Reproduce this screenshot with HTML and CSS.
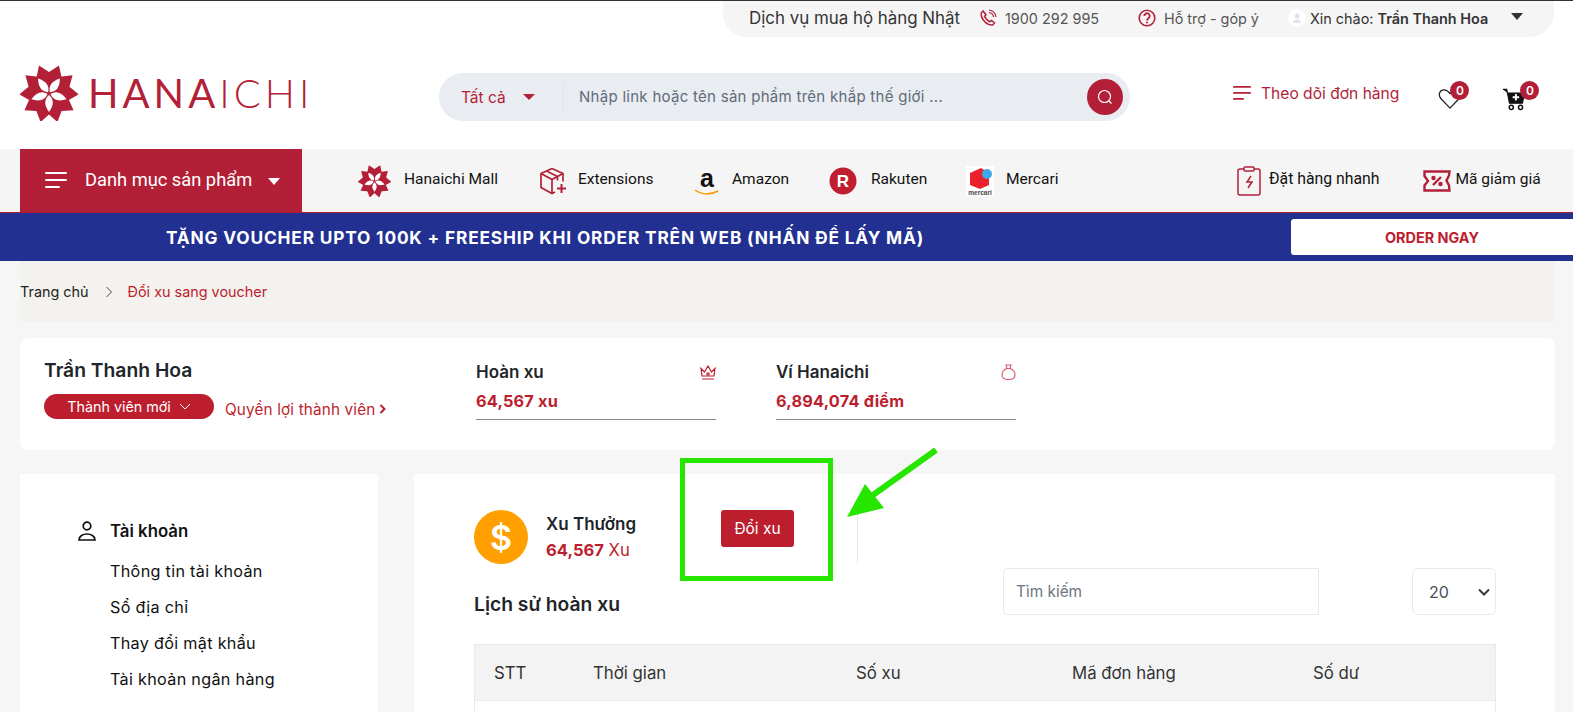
FILE: index.html
```html
<!DOCTYPE html>
<html lang="vi">
<head>
<meta charset="utf-8">
<title>Hanaichi - Đổi xu sang voucher</title>
<link rel="stylesheet" href="styles.css">
</head>
<body>
<svg class="defs" width="0" height="0" aria-hidden="true">
  <defs>
    <g id="flower">
      <g fill="#b41f38">
        <path id="petal" d="M-10-28 0-21.500 10-28 14-9 0 1-14-9Z"/>
        <use href="#petal" transform="rotate(72)"/>
        <use href="#petal" transform="rotate(144)"/>
        <use href="#petal" transform="rotate(216)"/>
        <use href="#petal" transform="rotate(288)"/>
      </g>
      <g fill="#fff">
        <path id="inner" d="M0 1.500Q7.500 8 0 18.500Q-7.500 8 0 1.500Z"/>
        <use href="#inner" transform="rotate(72)"/>
        <use href="#inner" transform="rotate(144)"/>
        <use href="#inner" transform="rotate(216)"/>
        <use href="#inner" transform="rotate(288)"/>
      </g>
    </g>
  </defs>
</svg>

<div class="topline"></div>

<div class="topwrap">
  <div class="topbar">
    <span class="service">Dịch vụ mua hộ hàng Nhật</span>
    <span class="topitem phone">
      <svg width="18" height="18" viewBox="0 0 18 18" fill="none" stroke="#b41f38" stroke-width="1.500"><path d="M4 2 2.200 4c-.5 4 1.800 7 3.800 9s4 3 7.500 3l2-2-3-2.600-1.700 1.400C8.800 12 6.500 9.500 5.500 7.400L7 5.800Z"/><path d="M10 3.500a5 5 0 0 1 4.500 4.500M10 1a8 8 0 0 1 7 7" stroke-width="1.200"/></svg>
      1900 292 995
    </span>
    <span class="topitem support">
      <svg width="18" height="18" viewBox="0 0 18 18" fill="none" stroke="#b41f38" stroke-width="1.600"><circle cx="9" cy="9" r="7.800"/><path d="M6.300 7a2.700 2.700 0 1 1 4.200 2.200C9.500 10 9 10.400 9 11.500" stroke-width="1.800"/><circle cx="9" cy="13.600" r="1" fill="#b41f38" stroke="none"/></svg>
      Hỗ trợ - góp ý
    </span>
    <span class="user">
      <span class="avatar"><svg width="18" height="18" viewBox="0 0 18 18"><circle cx="9" cy="9" r="9" fill="#fff"/><circle cx="9" cy="7" r="2.500" fill="#e4e4e4"/><path d="M5 14c0-5 8-5 8 0Z" fill="#e4e4e4"/></svg></span>
      <span class="hello">Xin chào: <b>Trần Thanh Hoa</b></span>
      <span class="caret"></span>
    </span>
  </div>
</div>

<header class="header">
  <a class="logo">
    <svg width="58" height="56" viewBox="-29 -28.500 58 56"><use href="#flower"/></svg>
    <span class="wordmark">HANA<span class="thin">ICHI</span></span>
  </a>
  <div class="search">
    <span class="scope">Tất cả <i class="scope-caret"></i></span>
    <span class="placeholder">Nhập link hoặc tên sản phẩm trên khắp thế giới ...</span>
    <span class="search-btn">
      <svg width="16" height="16" viewBox="0 0 16 16" fill="none" stroke="#fff" stroke-width="1.200"><circle cx="7.500" cy="7.500" r="6"/><path d="m12 12 2.500 2.500"/></svg>
    </span>
  </div>
  <a class="track">
    <svg width="18" height="14" viewBox="0 0 18 14" fill="#b41f38"><rect width="18" height="1.800" rx=".9"/><rect y="6" width="18" height="1.800" rx=".9"/><rect y="12" width="11" height="1.800" rx=".9"/></svg>
    Theo dõi đơn hàng
  </a>
  <span class="hicon heart">
    <svg width="24" height="22" viewBox="0 0 26 24" fill="none" stroke="#222" stroke-width="1.400"><path d="M13 22 3 11.500C-.5 7 2 2 6.500 2 9.500 2 11.500 4 13 6c1.500-2 3.500-4 6.500-4C24 2 26.500 7 23 11.500Z"/></svg>
    <span class="count">0</span>
  </span>
  <span class="hicon cart">
    <svg width="24" height="24" viewBox="0 0 26 26"><path d="M0 1.500h4l3 15h14l2.500-11H5" fill="#111" stroke="#111" stroke-width="1.200"/><path d="M14 6.500v7M10.500 10h7" stroke="#fff" stroke-width="2"/><g fill="none" stroke="#111" stroke-width="1.600"><circle cx="9" cy="21" r="2.200"/><circle cx="19" cy="21" r="2.200"/></g></svg>
    <span class="count">0</span>
  </span>
</header>

<nav class="nav">
  <a class="cat">
    <svg width="22" height="16" viewBox="0 0 22 16" fill="#fff"><rect y="0" width="22" height="2" rx="1"/><rect y="7" width="22" height="2" rx="1"/><rect y="14" width="15" height="2" rx="1"/></svg>
    <span class="cat-label">Danh mục sản phẩm</span>
    <i class="cat-caret"></i>
  </a>
  <div class="links">
    <a class="link l1"><svg width="33" height="32" viewBox="-29 -28.500 58 56"><use href="#flower"/></svg>Hanaichi Mall</a>
    <a class="link l2"><svg width="28" height="28" viewBox="0 0 28 28" fill="none" stroke="#b41f38" stroke-width="1.700"><path d="M13 1.500 2 6.500v14l11 6 3-1.500M13 1.500l11 5v8M2 6.500l11 6 11-6M13 12.500v14M7.500 4l11 5.500v4"/><path d="M22.500 17v9M18 21.500h9" stroke-width="2"/></svg>Extensions</a>
    <a class="link l3"><svg width="28" height="34" viewBox="0 0 28 34"><text x="14" y="23" text-anchor="middle" class="amz">a</text><path d="M2 26c7 5 16 5 23 1" fill="none" stroke="#f90" stroke-width="1.500"/></svg>Amazon</a>
    <a class="link l4"><svg width="28" height="28" viewBox="0 0 28 28"><circle cx="14" cy="14" r="13.500" fill="#bf1f2e"/><text x="14" y="20" text-anchor="middle" class="rkt">R</text></svg>Rakuten</a>
    <a class="link l5"><svg width="28" height="30" viewBox="0 0 28 30"><rect width="28" height="30" fill="#fff"/><path d="M4 7 15 2l8 5v12l-9 4-10-4Z" fill="#e8212d"/><circle cx="21" cy="8" r="5" fill="#3ea8e8"/><text x="14" y="28.500" text-anchor="middle" class="mrc">mercari</text></svg>Mercari</a>
  </div>
  <div class="links-right">
    <a class="link quick"><svg width="24" height="30" viewBox="0 0 24 30" fill="none" stroke="#b41f38" stroke-width="1.500"><rect x="1" y="3" width="22" height="26" rx="2"/><rect x="7" y="1" width="10" height="4" rx="1" fill="#f5f5f5"/><path d="m14 10-4 6h5l-4 6"/></svg>Đặt hàng nhanh</a>
    <a class="link coupon"><svg width="28" height="22" viewBox="0 0 28 22" fill="none" stroke="#b41f38" stroke-width="2.400"><path d="M1.500 1.500h25l-.5 4-2.500 5 2.500 5 .5 5h-25v-5L5 11 1.500 6Z"/><path d="m10 15 8-8" /><circle cx="10.500" cy="8" r="1" fill="#b41f38"/><circle cx="17.500" cy="14" r="1" fill="#b41f38"/></svg>Mã giảm giá</a>
  </div>
</nav>

<div class="banner">
  <span class="banner-text">TẶNG VOUCHER UPTO 100K + FREESHIP KHI ORDER TRÊN WEB (NHẤN ĐỂ LẤY MÃ)</span>
  <a class="banner-btn">ORDER NGAY</a>
</div>

<main class="page">
  <div class="crumbs">
    <span>Trang chủ</span>
    <svg class="crumb-sep" width="8" height="12" viewBox="0 0 8 12" fill="none" stroke="#444" stroke-width="1"><path d="m1.500 1 5 5-5 5"/></svg>
    <span class="crumb-now">Đổi xu sang voucher</span>
  </div>

  <section class="profile">
    <div class="who">
      <h2 class="name">Trần Thanh Hoa</h2>
      <div class="rank">
        <span class="badge">Thành viên mới
          <svg width="12" height="7" viewBox="0 0 12 7" fill="none" stroke="#fff" stroke-width="1"><path d="m1 1 5 5 5-5"/></svg>
        </span>
        <a class="perks">Quyền lợi thành viên
          <svg width="7" height="10" viewBox="0 0 7 10" fill="none" stroke="#bd1e2e" stroke-width="2"><path d="m1.500 1 4 4-4 4"/></svg>
        </a>
      </div>
    </div>
    <div class="wallet">
      <div class="wallet-head"><span>Hoàn xu</span>
        <svg width="16" height="15" viewBox="0 0 16 15" fill="none" stroke="#bd1e2e" stroke-width="1.200"><path d="M1 3.500 4.500 7 8 1l3.500 6L15 3.500 14 11H2ZM2 14h12"/><circle cx="8" cy="9" r="1.200"/></svg>
      </div>
      <div class="wallet-val">64,567 xu</div>
    </div>
    <div class="wallet">
      <div class="wallet-head"><span>Ví Hanaichi</span>
        <svg width="15" height="16" viewBox="0 0 15 16" fill="none" stroke="#d9576a" stroke-width="1.100"><path d="M5 1h5L9 4.500c3 1 5 3.500 5 6.500 0 3-2 4.500-6.500 4.500S1 14 1 11c0-3 2-5.500 5-6.500ZM6 4.500h3"/></svg>
      </div>
      <div class="wallet-val">6,894,074 điểm</div>
    </div>
  </section>

  <div class="columns">
    <aside class="side">
      <div class="side-head">
        <svg width="18" height="20" viewBox="0 0 18 20" fill="none" stroke="#111" stroke-width="1.700"><circle cx="9" cy="5" r="3.800"/><path d="M1 19c0-8 16-8 16 0Z"/></svg>
        Tài khoản
      </div>
      <ul class="side-list">
        <li>Thông tin tài khoản</li>
        <li>Sổ địa chỉ</li>
        <li>Thay đổi mật khẩu</li>
        <li>Tài khoản ngân hàng</li>
      </ul>
    </aside>

    <section class="content">
      <div class="coins">
        <span class="coin">$</span>
        <div class="coin-info">
          <div class="coin-title">Xu Thưởng</div>
          <div class="coin-val"><b>64,567</b> Xu</div>
        </div>
        <a class="exchange">Đổi xu</a>
        <span class="vline"></span>
      </div>

      <div class="history-bar">
        <h3 class="history">Lịch sử hoàn xu</h3>
        <div class="finder">Tìm kiếm</div>
        <div class="pager">20
          <svg width="12" height="8" viewBox="0 0 12 8" fill="none" stroke="#343a40" stroke-width="2"><path d="m1 1.500 5 5 5-5"/></svg>
        </div>
      </div>

      <div class="table">
        <div class="thead">
          <span>STT</span><span>Thời gian</span><span>Số xu</span><span>Mã đơn hàng</span><span>Số dư</span>
        </div>
        <div class="tbody"></div>
      </div>
    </section>
  </div>
</main>

<div class="note" aria-hidden="true">
  <div class="note-box"></div>
  <svg class="note-arrow" width="96" height="72" viewBox="0 0 96 72"><path d="M90 3 27 48" fill="none" stroke="#26e600" stroke-width="6"/><path d="M1 70 19 37 38 61Z" fill="#26e600"/></svg>
</div>
</body>
</html>
```

FILE: styles.css
```css
* { box-sizing: border-box; }
html, body { margin: 0; padding: 0; }
body {
  width: 1573px;
  height: 712px;
  overflow: hidden;
  position: relative;
  background: #fff;
  font-family: Inter, "Noto Sans", sans-serif;
  color: #212529;
}
a { color: inherit; text-decoration: none; }
.defs { position: absolute; }

.topline { height: 1px; background: #333; }

.topwrap { display: flex; justify-content: flex-end; padding-right: 19px; }
.topbar {
  width: 831px;
  height: 36px;
  background: #f5f5f5;
  border-radius: 0 0 24px 24px;
  display: flex;
  align-items: center;
  padding: 0 0 2px 26px;
  font-size: 14.400px;
  color: #555;
}
.service { font-size: 16.900px; color: #333; width: 230px; flex: none; white-space: nowrap; }
.topitem { display: flex; align-items: center; gap: 8px; flex: none; }
.phone { width: 159px; }
.support { width: 150px; }
.user { display: flex; align-items: center; gap: 4px; }
.avatar { display: flex; }
.hello { font-size: 14.400px; color: #333; white-space: nowrap; }
.hello b { font-weight: 600; }
.caret {
  margin-left: 19px;
  margin-top: -4px;
  border: 6.500px solid transparent;
  border-top: 7px solid #333;
  border-bottom: 0;
}

.header {
  height: 112px;
  display: flex;
  align-items: center;
  padding: 0 0 0 20px;
}
.logo { display: flex; align-items: center; gap: 10px; width: 419px; flex: none; }
.wordmark {
  font-family: Lato, sans-serif;
  font-size: 40px;
  letter-spacing: 4px;
  color: #b41f38;
  line-height: 1;
  font-weight: 400;
}
.wordmark .thin { font-weight: 300; }
.search {
  width: 691px;
  height: 48px;
  flex: none;
  background: #e9ecf1;
  border-radius: 24px;
  display: flex;
  align-items: center;
  padding: 0 7px 0 22px;
  font-size: 15px;
  margin-top: 8px;
}
.scope {
  width: 102px;
  flex: none;
  color: #b41f38;
  font-size: 15.500px;
  display: flex;
  align-items: center;
  gap: 17px;
}
.scope-caret { border: 6.500px solid transparent; border-top: 6px solid #b41f38; border-bottom: 0; }
.placeholder { flex: 1; color: #5f6b7a; letter-spacing: .28px; border-left: 1px solid #e0e3e9; padding-left: 15px; line-height: 32px; }
.search-btn {
  width: 36px;
  height: 36px;
  border-radius: 50%;
  background: #b41f38;
  display: flex;
  align-items: center;
  justify-content: center;
}
.track {
  display: flex;
  align-items: center;
  gap: 10px;
  margin-left: 103px;
  font-size: 15.600px;
  color: #b41f38;
  flex: none;
}
.hicon { position: relative; display: block; flex: none; }
.heart { margin-left: 39px; margin-top: 12px; width: 24px; height: 22px; }
.cart { margin-left: 41px; margin-top: 14px; width: 24px; height: 24px; }
.hicon svg { display: block; }
.count {
  position: absolute;
  top: -7px;
  right: -7px;
  width: 19px;
  height: 19px;
  border-radius: 50%;
  background: #b41f38;
  color: #fff;
  font-size: 12px;
  font-weight: 600;
  display: flex;
  align-items: center;
  justify-content: center;
}
.cart .count { right: -12px; }

.nav {
  height: 64px;
  background: #f5f5f5;
  border-bottom: 1px solid #b41f38;
  display: flex;
  padding-left: 20px;
  font-family: Roboto, sans-serif;
  color: #111;
}
.cat {
  width: 282px;
  height: 63px;
  background: #b41f38;
  color: #fff;
  display: flex;
  align-items: center;
  padding: 0 0 2px 25px;
  font-size: 18.300px;
  flex: none;
}
.cat-label { margin-left: 18px; }
.cat-caret { margin-left: 16px; margin-top: 3px; border: 6px solid transparent; border-top: 7px solid #fff; border-bottom: 0; }
.links { display: flex; align-items: center; padding-left: 56px; flex: none; width: 935px; }
.link { display: flex; align-items: center; gap: 12px; font-size: 15.500px; flex: none; padding-bottom: 4px; }
.link svg { margin-top: 4px; flex: none; }
.l1 { width: 181px; gap: 13px; }
.l2 { width: 154px; gap: 11px; }
.l3 { width: 136px; gap: 11px; }
.l4 { width: 137px; gap: 14px; }
.amz { font: 700 25px "Liberation Sans", sans-serif; fill: #111; }
.rkt { font: 700 17px "Liberation Sans", sans-serif; fill: #fff; }
.mrc { font: 700 6.500px "Liberation Sans", sans-serif; fill: #444; }
.links-right { display: flex; align-items: center; gap: 43px; }
.links-right .quick { gap: 8px; font-size: 15.800px; }
.links-right .coupon { gap: 5px; }

.banner {
  height: 48px;
  background: #223092;
  display: flex;
  align-items: center;
  padding-left: 166px;
  color: #fff;
}
.banner-text { font-size: 17.300px; font-weight: 700; letter-spacing: .83px; width: 1125px; flex: none; white-space: nowrap; }
.banner-btn {
  width: 282px;
  height: 36px;
  background: #fff;
  border-radius: 3px 0 0 3px;
  color: #bd1e2e;
  font-size: 14.400px;
  font-weight: 700;
  display: flex;
  align-items: center;
  justify-content: center;
  flex: none;
}

.page { background: #f6f6f6; padding: 0 18px 0 20px; height: 451px; overflow: hidden; }
.crumbs {
  height: 61px;
  background: #f3f2ee;
  display: flex;
  align-items: center;
  font-size: 14.400px;
  gap: 15px;
  color: #222;
  margin-bottom: 16px;
}
.crumb-sep { margin-left: 1px; }
.crumb-now { color: #bd1e2e; }

.profile {
  height: 112px;
  background: #fff;
  border-radius: 8px;
  display: flex;
  padding: 18px 0 0 24px;
  margin-bottom: 24px;
}
.who { width: 432px; flex: none; }
.name { margin: 0; font-size: 19.300px; font-weight: 600; line-height: 28px; color: #212529; }
.rank { display: flex; align-items: center; gap: 11px; margin-top: 10px; }
.badge {
  width: 170px;
  height: 25px;
  border-radius: 13px;
  background: #bd1e2e;
  color: #fff;
  font-size: 14.300px;
  display: flex;
  align-items: center;
  justify-content: center;
  gap: 8px;
}
.perks { color: #bd1e2e; font-size: 15.300px; margin-top: 5px; display: flex; align-items: center; gap: 4px; letter-spacing: .15px; }
.wallet { width: 240px; margin-right: 60px; flex: none; height: 63px; border-bottom: 1px solid #888; margin-top: 1px; }
.wallet-head { display: flex; justify-content: space-between; align-items: center; font-size: 17px; font-weight: 600; height: 30px; }
.wallet-val { color: #bd1e2e; font-size: 16.300px; font-weight: 700; line-height: 28px; letter-spacing: .2px; }

.columns { display: flex; gap: 36px; align-items: flex-start; }
.side { width: 358px; height: 260px; background: #fff; flex: none; padding: 45px 0 0 58px; font-size: 16.200px; color: #111; }
.side-head { display: flex; align-items: center; gap: 14px; font-weight: 600; height: 24px; font-size: 16.800px; }
.side-list { list-style: none; margin: 10px 0 0; padding: 0 0 0 32px; }
.side-list li { height: 36px; line-height: 36px; letter-spacing: .3px; }

.content { flex: 1; height: 260px; background: #fff; padding: 36px 59px 0 60px; }
.coins { display: flex; align-items: flex-start; height: 58px; position: relative; }
.coin {
  width: 54px;
  height: 54px;
  border-radius: 50%;
  background: #ff9f00;
  color: #fff;
  font-size: 34px;
  font-weight: 600;
  display: flex;
  align-items: center;
  justify-content: center;
  flex: none;
}
.coin-info { margin-left: 18px; width: 175px; flex: none; padding-top: 1px; }
.coin-title { font-size: 17px; font-weight: 600; line-height: 26px; white-space: nowrap; }
.coin-val { font-size: 16.600px; color: #bd1e2e; line-height: 26px; }
.coin-val b { font-weight: 700; }
.exchange {
  width: 73px;
  height: 37px;
  background: #bd1e2e;
  border-radius: 3px;
  color: #fff;
  font-size: 15.500px;
  display: flex;
  align-items: center;
  justify-content: center;
  flex: none;
}
.vline { width: 1px; height: 48px; background: #e6e6e6; margin: 5px 0 0 63px; }
.history-bar { display: flex; height: 76px; }
.history { margin: 22px 0 0; font-size: 19.300px; font-weight: 600; line-height: 28px; width: 529px; flex: none; }
.finder {
  width: 316px;
  height: 47px;
  border: 1px solid #e9e9e9;
  border-radius: 4px 0 0 4px;
  font-size: 15.400px;
  color: #6c757d;
  display: flex;
  align-items: center;
  padding-left: 12px;
  flex: none;
}
.pager {
  margin-left: 93px;
  width: 84px;
  height: 47px;
  border: 1px solid #e9e9e9;
  border-radius: 6px;
  font-size: 16px;
  color: #495057;
  display: flex;
  align-items: center;
  justify-content: space-between;
  padding: 0 5px 0 16px;
  flex: none;
}
.table { border: 1px solid #e9e9e9; border-bottom: 0; }
.thead {
  height: 56px;
  background: #f3f3f3;
  border-bottom: 1px solid #e9e9e9;
  display: grid;
  grid-template-columns: 99px 263px 216px 241px 1fr;
  align-items: center;
  padding-left: 19px;
  font-size: 16.800px;
  color: #333;
}
.tbody { height: 40px; }

.note { position: absolute; left: 0; top: 0; }
.note-box { position: absolute; left: 680px; top: 458px; width: 153px; height: 123px; border: 5px solid #26e600; }
.note-arrow { position: absolute; left: 846px; top: 447px; }
```
